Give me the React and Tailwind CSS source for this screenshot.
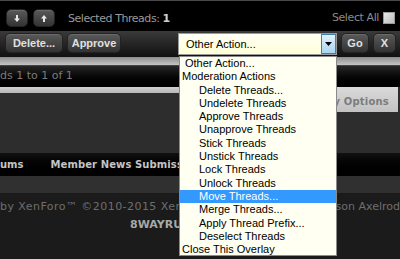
import React from "react";

const items = [
  "Delete Threads...",
  "Undelete Threads",
  "Approve Threads",
  "Unapprove Threads",
  "Stick Threads",
  "Unstick Threads",
  "Lock Threads",
  "Unlock Threads",
  "Move Threads...",
  "Merge Threads...",
  "Apply Thread Prefix...",
  "Deselect Threads",
];

function Arrow({ up }) {
  return (
    <svg width="8" height="9" viewBox="0 0 8 9" className={up ? "" : "rotate-180"}>
      <path d="M4 1 L1 4.5 H3 V8 H5 V4.5 H7 Z" fill="#e8e8e8" />
    </svg>
  );
}

function DarkBtn({ children, className = "" }) {
  return (
    <div
      className={
        "flex items-center justify-center rounded-[5px] border border-[#222] bg-gradient-to-b from-[#5a5a5a] to-[#333] text-[#e0e0e0] font-bold text-[11px] shadow-[inset_0_1px_0_#6a6a6a] " +
        className
      }
    >
      {children}
    </div>
  );
}

export default function App() {
  return (
    <div className="relative w-[400px] h-[259px] overflow-hidden bg-[#1b1b1b] font-['Liberation_Sans',sans-serif]">
      {/* top bar */}
      <div className="h-[31px] bg-black border-t border-[#4a4a4a] flex items-start pt-[8px] pl-[6px] pr-[5px]">
        <DarkBtn className="w-[22px] h-[18px]">
          <Arrow />
        </DarkBtn>
        <DarkBtn className="w-[22px] h-[18px] ml-[5px]">
          <Arrow up />
        </DarkBtn>
        <div className="ml-[13px] mt-[2px] text-[11px] text-[#9a9a9a] font-['DejaVu_Sans',sans-serif] tracking-[-0.45px]">
          Selected Threads: <span className="font-bold text-[#cfcfcf]">1</span>
        </div>
        <div className="ml-auto flex items-center mt-[1px]">
          <span className="text-[11px] text-[#8a8a8a] font-['DejaVu_Sans',sans-serif] tracking-[-0.4px]">Select All</span>
          <span className="ml-[4px] w-[12px] h-[12px] border border-[#9a9a9a] bg-gradient-to-br from-[#e8e8e8] to-[#bdbdbd]" />
        </div>
      </div>
      {/* action row */}
      <div className="h-[26px] bg-gradient-to-b from-[#3a3a3a] to-[#111] flex items-start pt-[2px] pl-[5px] pr-[3px]">
        <DarkBtn className="w-[58px] h-[20px]">Delete...</DarkBtn>
        <DarkBtn className="w-[54px] h-[20px] ml-[4px]">Approve</DarkBtn>
        <div className="ml-[57px] w-[159px] h-[22px] border border-[#9a9a9a] bg-gradient-to-b from-[#fffff4] to-[#ffffd8] flex items-center">
          <span className="pl-[7px] text-[11px] text-black flex-1">Other Action...</span>
          <div className="w-[15px] h-[20px] border border-[#3c7fb1] bg-gradient-to-b from-[#e3f1fb] to-[#a9d4f2] flex items-center justify-center">
            <svg width="7" height="4" viewBox="0 0 7 4">
              <path d="M0 0 H7 L3.5 4 Z" fill="#000" />
            </svg>
          </div>
        </div>
        <DarkBtn className="w-[28px] h-[20px] ml-[4px]">Go</DarkBtn>
        <DarkBtn className="w-[23px] h-[20px] ml-[4px]">X</DarkBtn>
      </div>
      {/* gray band */}
      <div className="h-[8px] bg-gradient-to-b from-[#8e8e8e] to-[#c4c4c4]" />
      {/* page nav bar */}
      <div className="h-[22px] bg-gradient-to-b from-[#262626] to-black border-t border-[#444] flex items-center">
        <span className="text-[11px] text-[#7a7a7a] font-['DejaVu_Sans',sans-serif]">ds 1 to 1 of 1</span>
      </div>
      {/* options + dark area */}
      <div className="h-[66px] bg-[#2d2d2d] flex items-start">
        <div className="flex-1 h-[6px] bg-gradient-to-b from-[#cfcfcf] to-[#b8b8b8]" />
        <div className="w-[130px] h-[25px] mr-[2px] bg-gradient-to-b from-[#dadada] to-[#c2c2c2] flex items-center justify-end pr-[9px] pt-[4px] whitespace-nowrap">
          <span className="text-[10px] font-bold text-[#7c7c7c] font-['DejaVu_Sans',sans-serif] tracking-[0.2px]">Display Options</span>
        </div>
      </div>
      {/* nav */}
      <div className="h-[23px] bg-gradient-to-b from-[#111] to-black flex items-center whitespace-nowrap">
        <span className="text-[10px] font-bold text-[#c4c4c4] font-['DejaVu_Sans',sans-serif]">ums</span>
        <span className="ml-[27px] text-[10px] font-bold text-[#c4c4c4] font-['DejaVu_Sans',sans-serif] tracking-[0.1px]">Member News Submissions</span>
      </div>
      <div className="h-[17px] bg-[#303030]" />
      {/* footer */}
      <div className="pt-[6px] text-[11px] font-['DejaVu_Sans',sans-serif] whitespace-nowrap">
        <div className="flex text-[#6e6e6e]">
          <span className="w-[338px] overflow-hidden tracking-[0.45px]">by XenForo™ ©2010-2015 XenForo Ltd.</span>
          <span>Jason Axelrod</span>
        </div>
        <div className="ml-[130px] font-bold text-[#a8a8a8] mt-[1px]">8WAYRUN</div>
      </div>

      {/* dropdown list overlay */}
      <div className="absolute left-[179px] top-[56px] w-[158px] h-[200px] bg-[#fffff2] border border-[#8a8a8a] text-[11px] text-black leading-[13.3px]">
        <div className="pl-[5px]">Other Action...</div>
        <div className="pl-[2px]">Moderation Actions</div>
        {items.map((t) => (
          <div
            key={t}
            className={
              "pl-[19px] " + (t === "Move Threads..." ? "bg-[#3399ff] text-white" : "")
            }
          >
            {t}
          </div>
        ))}
        <div className="pl-[2px]">Close This Overlay</div>
      </div>
    </div>
  );
}
